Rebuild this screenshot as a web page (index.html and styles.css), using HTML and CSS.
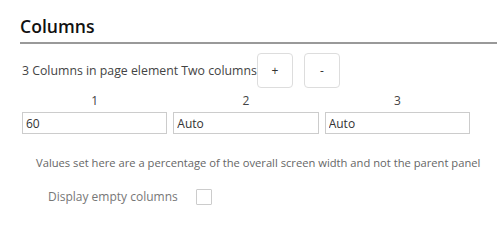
FILE: index.html
```html
<!DOCTYPE html>
<html>
<head>
<meta charset="utf-8">
<link rel="stylesheet" href="styles.css">
</head>
<body>
<div class="panel">
  <h2 class="title">Columns</h2>
  <div class="count-row">
    <span class="count-text">3 Columns in page element Two columns</span>
    <button class="btn">+</button>
    <button class="btn">-</button>
  </div>
  <div class="cols">
    <div class="col">
      <div class="col-label">1</div>
      <input class="col-input" type="text" value="60">
    </div>
    <div class="col">
      <div class="col-label">2</div>
      <input class="col-input" type="text" value="Auto">
    </div>
    <div class="col">
      <div class="col-label">3</div>
      <input class="col-input" type="text" value="Auto">
    </div>
  </div>
  <p class="note">Values set here are a percentage of the overall screen width and not the parent panel</p>
  <label class="empty-row">
    <span class="empty-text">Display empty columns</span>
    <span class="checkbox"></span>
  </label>
</div>
</body>
</html>
```
FILE: styles.css
```css
html, body {
  margin: 0;
  background: #fff;
}
body {
  font-family: "Open Sans", "Liberation Sans", sans-serif;
  color: #444;
}
.panel {
  padding: 13px 3px 0 20px;
}
.title {
  margin: 0;
  font-size: 17.6px;
  font-weight: 600;
  color: #111;
  line-height: 26px;
  padding-bottom: 3px;
  border-bottom: 2px solid #999;
}
.count-row {
  display: flex;
  align-items: center;
  margin-top: 9px;
  padding-left: 2px;
}
.count-text {
  font-size: 12.3px;
  margin-right: 0;
  white-space: nowrap;
}
.btn {
  width: 36px;
  height: 35px;
  margin-right: 11px;
  padding: 0;
  background: #fff;
  border: 1px solid #ddd;
  border-radius: 4px;
  font-family: inherit;
  font-size: 12px;
  color: #333;
}
.cols {
  display: flex;
  gap: 6px;
  margin-top: 4px;
  margin-left: 2px;
  width: 448px;
}
.col {
  flex: 1;
  min-width: 0;
  display: flex;
  flex-direction: column;
}
.col-label {
  text-align: center;
  font-size: 12px;
  line-height: 18px;
  margin-bottom: 2px;
}
.col-input {
  box-sizing: border-box;
  width: 100%;
  height: 22px;
  border: 1px solid #ccc;
  padding: 0 3px;
  font-family: inherit;
  font-size: 12px;
  color: #333;
  outline: none;
}
.note {
  margin: 21px 0 0 16px;
  font-size: 11.2px;
  line-height: 15px;
  color: #666;
  white-space: nowrap;
}
.empty-row {
  display: flex;
  align-items: center;
  margin-top: 18px;
  padding-left: 28px;
}
.empty-text {
  font-size: 12px;
  color: #777;
}
.checkbox {
  width: 14px;
  height: 14px;
  border: 1px solid #ccc;
  margin-left: 18px;
  border-radius: 1px;
}
```
